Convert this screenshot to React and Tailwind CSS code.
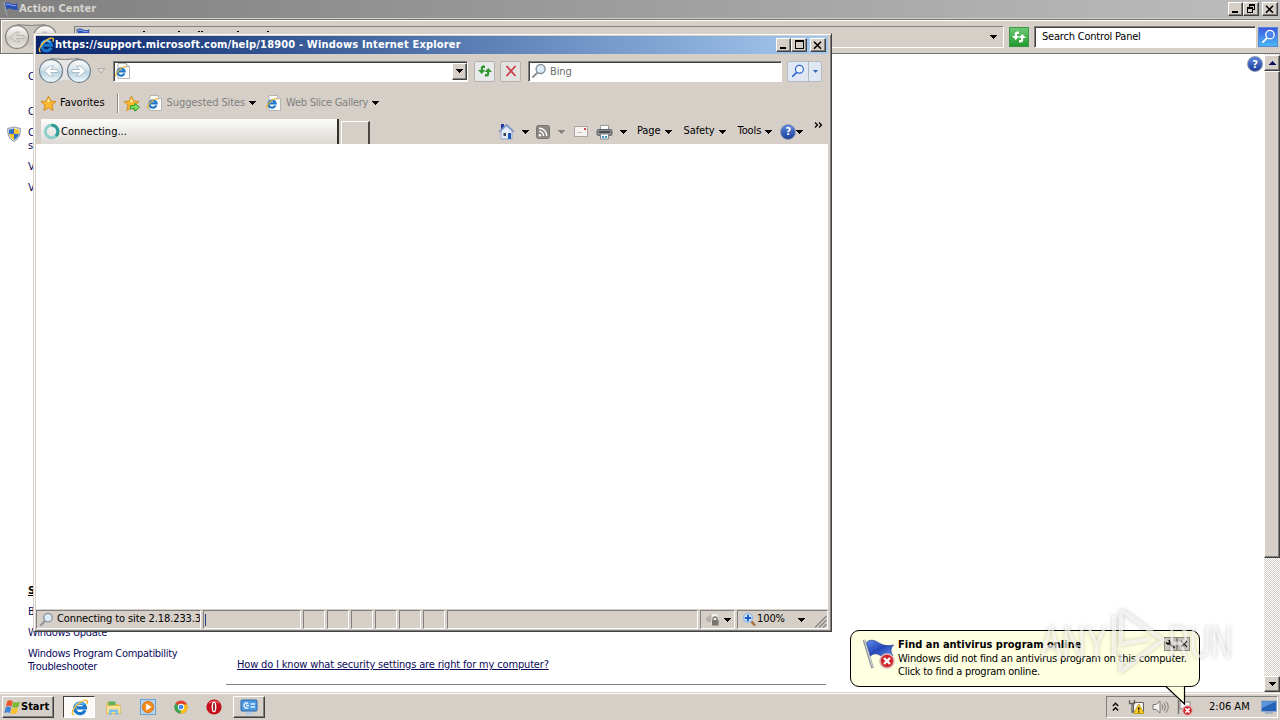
const RAISED =
  'bg-[#d6cfc8] border border-t-white border-l-white border-r-[#404040] border-b-[#404040] shadow-[inset_-1px_-1px_0_#808080]'
const SUNKEN = 'border border-t-[#808080] border-l-[#808080] border-r-white border-b-white'
const FIELD =
  'bg-white border border-t-[#808080] border-l-[#808080] border-r-white border-b-white shadow-[inset_1px_1px_0_#404040]'

/* ---------- icons ---------- */

function Caret({ className = 'text-black' }) {
  return (
    <svg width="7" height="4" viewBox="0 0 7 4" className={`shrink-0 ${className}`} shapeRendering="crispEdges">
      <path d="M0 0h7v1H6v1H5v1H4v1H3V3H2V2H1V1H0z" fill="currentColor" />
    </svg>
  )
}

function IELogo({ size = 16 }) {
  return (
    <svg width={size} height={size} viewBox="0 0 16 16" className="shrink-0">
      <path d="M13.200 10.600A5 5 0 1 1 13.500 8.300H5.500" fill="none" stroke="#1a78cc" strokeWidth="3" />
      <path d="M3.800 7.600a4.900 4.900 0 0 1 8.400-2.300" fill="none" stroke="#62c4f6" strokeWidth="1.500" />
      <path d="M2.800 14.900C-.8 14.600 2.600 7.200 8 3.600c3.400-2.400 6.600-3.200 7.300-1.700.3.800 0 1.900-.5 2.900" fill="none" stroke="#f2bb3c" strokeWidth="1.400" />
    </svg>
  )
}

function IEPage() {
  return (
    <svg width="16" height="16" viewBox="0 0 16 16" className="shrink-0">
      <path d="M3 .5h8.500L14.500 3.500v12H3z" fill="#fff" stroke="#b4b4b4" />
      <path d="M11.500.5v3h3" fill="#e8e8e8" stroke="#b4b4b4" />
      <path d="M9.400 10.400A3.600 3.600 0 1 1 9.600 8.400H3.500" fill="none" stroke="#1f78c8" strokeWidth="2.200" />
      <path d="M1.400 13.200C-.4 12 2.800 7.400 6 5.200c2.400-1.600 4.800-2.100 5.200-.6" fill="none" stroke="#e5b23a" strokeWidth="1.200" />
    </svg>
  )
}

function FlagIcon({ size = 16 }) {
  return (
    <svg width={size} height={size} viewBox="0 0 16 16" className="shrink-0">
      <path d="M1 1.500l2.800 13" stroke="#9aa0a8" strokeWidth="1.300" />
      <path d="M2 2.500c2-1.400 4-1 6 0s4 .8 6.500-.2c-.6 2-.6 4 .8 6.200-3 .8-4.800.4-6.800-.4s-3.400-.6-5 .6z" fill="#2a4fb5" />
      <path d="M3 3.600c1.800-.8 3.200-.4 4.800.4s2.800.9 5 .5" fill="none" stroke="#7f9ce6" strokeWidth="1.200" />
    </svg>
  )
}

function BigFlag() {
  return (
    <svg width="34" height="34" viewBox="0 0 34 34" className="shrink-0">
      <defs>
        <linearGradient id="flagCloth" x1="0" y1="0" x2="1" y2="1">
          <stop offset="0" stopColor="#5f8df0" />
          <stop offset=".5" stopColor="#2447b8" />
          <stop offset="1" stopColor="#6a9af2" />
        </linearGradient>
      </defs>
      <path d="M2 3l8.500 28" stroke="#8f9499" strokeWidth="2.600" />
      <path d="M2.500 3l8 27" stroke="#d9dcdf" strokeWidth="1" />
      <path d="M4.500 5.500C8 2 12 3 16 5.500s8 4 15.500 2.500C28 12 28.500 15 31 19c-6 2.500-10 1-13.500-1S11.500 16.500 8.500 19z" fill="url(#flagCloth)" stroke="#2a4496" strokeWidth=".8" />
    </svg>
  )
}

function NavArrows({ muted, id }) {
  const fill = muted ? '#cfcac4' : '#b9d3e0'
  return (
    <svg width="54" height="28" viewBox="0 0 54 28" className="shrink-0">
      <defs>
        <linearGradient id={id} x1="0" y1="0" x2="0" y2="1">
          <stop offset="0" stopColor="#ffffff" />
          <stop offset=".45" stopColor={muted ? '#dedad5' : '#d5e3ea'} />
          <stop offset=".55" stopColor={fill} />
          <stop offset="1" stopColor={muted ? '#e9e6e2' : '#f3fcff'} />
        </linearGradient>
      </defs>
      <path d="M13 1.500c6 0 9 1 14 1s8-1 14-1a12.500 12.500 0 0 1 0 25c-6 0-9-4-14-4s-8 4-14 4a12.500 12.500 0 0 1 0-25z" fill={muted ? '#c9c4be' : '#e6e5e3'} />
      <path d="M13 1.500c6 0 9 1 14 1s8-1 14-1" fill="none" stroke="#8f8c88" strokeWidth="1.200" />
      {[13, 41].map((cx) => (
        <circle key={cx} cx={cx} cy="14" r="11.500" fill={`url(#${id})`} stroke={muted ? '#8b8783' : '#76838c'} strokeWidth="1.300" />
      ))}
      <path
        d="M20 12.500v3h-7.500l3 3.500h-3.500L6.500 14 12 9h3.500l-3 3.500zM34 12.500v3h7.500l-3 3.500H42l5.500-5L42 9h-3.500l3 3.500z"
        fill={muted ? '#dcd8d3' : '#ffffff'}
        stroke={muted ? '#b5b0aa' : '#9fb3c0'}
        strokeWidth=".8"
      />
    </svg>
  )
}

function RefreshArrows({ light }) {
  const c = light ? '#ffffff' : '#2f9a2f'
  return (
    <svg width="16" height="16" viewBox="0 0 16 16" className="shrink-0">
      <path d="M8 2.500H6.500C4.500 2.500 3.800 3.500 3.800 5v2H1l3.700 4L8.400 7H6V5h2zM8 13.500h1.500c2 0 2.700-1 2.700-2.500V9H15l-3.700-4-3.700 4H10v2H8z" fill={c} />
    </svg>
  )
}

function Magnifier({ size = 16, color = '#8a9097', glass = '#dcecf8' }) {
  return (
    <svg width={size} height={size} viewBox="0 0 16 16" className="shrink-0">
      <path d="M6.400 9.600L2 14" stroke={color} strokeWidth="2" strokeLinecap="round" />
      <circle cx="9.600" cy="6" r="4.500" fill={glass} stroke={color} strokeWidth="1.400" />
    </svg>
  )
}

function Star({ plus }) {
  return (
    <svg width="17" height="17" viewBox="0 0 16 16" className="shrink-0">
      <path d="M8 1l2.100 4.700 5 .5-3.800 3.400 1.100 5L8 12l-4.400 2.600 1.100-5L.9 6.200l5-.5z" fill="#fcb833" stroke="#d08a1c" strokeWidth=".9" />
      <path d="M8 2.800l1.300 3.700H6.500z" fill="#fff0b0" />
      {plus && <path d="M7 10h4V7.800l4.600 3.700L11 15.200V13H7z" fill="#7be05a" stroke="#2f9a2f" strokeWidth=".9" />}
    </svg>
  )
}

function HelpIcon() {
  return (
    <span className="flex size-4 shrink-0 items-center justify-center rounded-full border border-[#8d98b4] bg-linear-to-b from-[#5d86dc] to-[#1d3f9c] text-[11px] leading-none font-bold tracking-normal text-white">
      ?
    </span>
  )
}

function HomeIcon() {
  return (
    <svg width="17" height="17" viewBox="0 0 17 17" className="shrink-0">
      <path d="M3 1h3v5H3z" fill="#2836a8" />
      <path d="M3 8l5.500-5L14 8v8H3z" fill="#e3ebf6" stroke="#8fa6c8" />
      <path d="M1 9l7.500-7.300L16 9" fill="none" stroke="#7b93c4" strokeWidth="1.500" />
      <path d="M10 10h3v6h-3z" fill="#2456b8" />
      <path d="M5.500 10h2.500v3H5.500z" fill="#3b4350" />
    </svg>
  )
}

function FeedIcon() {
  return (
    <svg width="14" height="14" viewBox="0 0 14 14" className="shrink-0">
      <rect x=".5" y=".5" width="13" height="13" rx="2" fill="#8c8884" stroke="#77736f" />
      <circle cx="4" cy="10.200" r="1.300" fill="#fff" />
      <path d="M3 6.300a4.700 4.700 0 0 1 4.700 4.700M3 3.200a7.800 7.800 0 0 1 7.800 7.800" fill="none" stroke="#fff" strokeWidth="1.400" />
    </svg>
  )
}

function MailIcon() {
  return (
    <svg width="14" height="11" viewBox="0 0 14 11" className="shrink-0">
      <rect x=".5" y=".5" width="13" height="10" fill="#f6f4f2" stroke="#a9a5a0" />
      <path d="M10 2h2v2h-2z" fill="#d0454c" />
      <path d="M3 6.500h5" stroke="#c4c0bb" />
    </svg>
  )
}

function PrinterIcon() {
  return (
    <svg width="17" height="16" viewBox="0 0 17 16" className="shrink-0">
      <path d="M4.500 1.500h8v5h-8z" fill="#fff" stroke="#9a9a9a" />
      <rect x="1" y="5.500" width="15" height="6" rx="1.500" fill="#8b8f94" stroke="#5f6368" />
      <path d="M3 8h11" stroke="#33373b" strokeWidth="1.500" />
      <path d="M4.500 10h8v5h-8z" fill="#fff" stroke="#7d8791" />
      <path d="M6 12h2v2H6zM9 12h2v2H9z" fill="#3b9ad0" />
    </svg>
  )
}

function Shield() {
  return (
    <svg width="14" height="16" viewBox="0 0 14 16" className="shrink-0">
      <path d="M7 .8c2 1 4 1.400 6.200 1.400C13.600 8.500 12 12.800 7 15.300 2 12.800.4 8.500.8 2.200 3 2.200 5 1.800 7 .8z" fill="#e9eef4" stroke="#7f8b98" />
      <path d="M7 2.200v5.900H2.100c-.2-1.500-.2-3-.1-4.600C3.800 3.400 5.500 3 7 2.200zM7 8.100h4.900c-.6 2.500-2 4.400-4.900 5.900z" fill="#2f6fcc" />
      <path d="M7 2.200v5.900h4.900c.2-1.500.2-3 .1-4.600C10.200 3.400 8.500 3 7 2.200zM7 8.100H2.100C2.700 10.600 4.100 12.500 7 14z" fill="#f5c431" />
    </svg>
  )
}

function WindowsFlag() {
  return (
    <svg width="17" height="17" viewBox="0 0 16 16" className="shrink-0">
      <path d="M3 2.200c1.700-1.200 3.500-1.200 5.200-.1L7 7.200c-1.700-1-3.500-1-5.200 0z" fill="#e8572a" />
      <path d="M8.700 2.500c1.900 1 3.900 1 6.300-.2l-1.400 5C11.600 8.400 9.700 8.400 7.600 7.500z" fill="#7db832" />
      <path d="M1.600 7.900c1.700-1 3.500-1 5.200 0l-1.200 5.300c-1.700-1-3.500-1-5.300 0z" fill="#3b84d8" />
      <path d="M7.400 8.200c1.900.9 3.900 1 6 0l-1.300 5.100c-2 1-4 1-5.900 0z" fill="#f7c02c" />
    </svg>
  )
}

function ExplorerIcon() {
  return (
    <svg width="17" height="17" viewBox="0 0 17 17">
      <path d="M2 3h5l1 2h6v10H2z" fill="#e5bd4c" />
      <path d="M3.500 2.500h7v4h-7z" fill="#58b35c" />
      <path d="M1.500 6.500h14v8h-14z" fill="#f9e293" stroke="#d9b24c" strokeWidth=".7" />
      <path d="M4 16v-5.500h9V16h-2.500v-3h-4v3z" fill="#7fc0e8" />
    </svg>
  )
}

function MediaIcon() {
  return (
    <svg width="16" height="16" viewBox="0 0 16 16">
      <rect x=".5" y=".5" width="15" height="15" fill="#b5d4ee" stroke="#6fa0d0" />
      <circle cx="8" cy="8" r="5.700" fill="#f58a1e" stroke="#d86a10" strokeWidth=".8" />
      <path d="M6.200 4.500v7L11.500 8z" fill="#fff" />
    </svg>
  )
}

function ChromeIcon() {
  return (
    <svg width="14" height="14" viewBox="0 0 16 16">
      <circle cx="8" cy="8" r="7.500" fill="#e0412f" />
      <path d="M8 8L1.500 4.200A7.500 7.500 0 0 0 7.500 15.500L11.500 9z" fill="#35a853" />
      <path d="M8 8l-.5 7.500A7.500 7.500 0 0 0 14.900 5H8z" fill="#fbc21b" />
      <circle cx="8" cy="8" r="3.600" fill="#fff" />
      <circle cx="8" cy="8" r="2.700" fill="#4285f4" />
    </svg>
  )
}

function OperaIcon() {
  return (
    <svg width="16" height="16" viewBox="0 0 16 16">
      <circle cx="8" cy="8" r="7.600" fill="#c4101c" />
      <path d="M3 4a7 5 0 0 1 10 0" fill="none" stroke="#ee6a6a" strokeWidth="1.500" />
      <ellipse cx="8" cy="8" rx="2.400" ry="5.300" fill="#fff" />
      <ellipse cx="8" cy="8" rx=".9" ry="4.300" fill="#8a0a12" />
    </svg>
  )
}

function ControlPanelIcon() {
  return (
    <svg width="18" height="16" viewBox="0 0 18 16">
      <rect x="1" y="1" width="16" height="11" rx="1" fill="#4c9be0" stroke="#2b66a8" />
      <path d="M8.300 4.500A2.600 2.600 0 1 0 8.300 8.500M6 6.500h3" fill="none" stroke="#e4f2ff" strokeWidth="1.300" />
      <path d="M10.500 5h4.500M10.500 8h4.500" stroke="#e4f2ff" strokeWidth="1.300" />
      <path d="M6 14.500h6" stroke="#a4c9ea" strokeWidth="2" />
    </svg>
  )
}

function ErrorBadge({ className }) {
  return (
    <svg viewBox="0 0 16 16" className={className}>
      <circle cx="8" cy="8" r="7" fill="#d3232b" stroke="#dcb6b6" strokeWidth="1.600" />
      <path d="M5 5l6 6M11 5l-6 6" stroke="#fff" strokeWidth="2.400" />
    </svg>
  )
}

/* ---------- shared bits ---------- */

function WindowButtons({ restore }) {
  return (
    <div className="flex">
      <div className={`flex h-[14px] w-[15px] items-center justify-center ${RAISED}`}>
        <svg width="11" height="10" viewBox="0 0 11 10" shapeRendering="crispEdges">
          <path d="M2 7h6v2H2z" />
        </svg>
      </div>
      <div className={`flex h-[14px] w-4 items-center justify-center ${RAISED}`}>
        <svg width="11" height="10" viewBox="0 0 11 10" shapeRendering="crispEdges">
          {restore ? (
            <path d="M3 0h6v6H7V5h1V2H4v1H3zM1 3h6v6H1zM2 5v3h4V5z" fillRule="evenodd" />
          ) : (
            <path d="M1 0h9v9H1zM2 2v6h7V2z" fillRule="evenodd" />
          )}
        </svg>
      </div>
      <div className={`ml-[3px] flex h-[14px] w-4 items-center justify-center ${RAISED}`}>
        <svg width="10" height="9" viewBox="0 0 10 9">
          <path d="M1 .8l7 7M8 .8l-7 7" stroke="#000" strokeWidth="1.600" />
        </svg>
      </div>
    </div>
  )
}

function ScrollBar() {
  return (
    <div className="flex w-4 shrink-0 flex-col bg-[repeating-conic-gradient(#d4d0c8_0_25%,#fff_0_50%)] bg-[length:2px_2px]">
      <div className={`mt-px flex h-[16px] items-center justify-center ${RAISED}`}>
        <Caret className="rotate-180" />
      </div>
      <div className={`h-[487px] ${RAISED}`} />
      <div className="flex-1" />
      <div className={`flex h-4 items-center justify-center ${RAISED}`}>
        <Caret />
      </div>
    </div>
  )
}

/* ---------- Action Center ---------- */

function ActionCenter() {
  return (
    <div className="flex h-[692px] flex-col">
      <div className="flex h-[18px] items-center bg-linear-to-r from-[#808080] to-[#bdbdbd] pr-[2px] pl-[3px]">
        <FlagIcon />
        <span className="flex-1 pt-px text-[11px] font-bold tracking-[0.08px] text-[#d8d5cf]">Action Center</span>
        <WindowButtons restore />
      </div>
      <div className="mt-px flex h-[35px] items-center border-t border-b border-l border-[#77736e] bg-[#d6cfc8] pr-[2px] pl-[3px] shadow-[inset_1px_1px_0_#fff]">
        <NavArrows muted id="acNav" />
        <div className={`ml-4 flex h-[22px] w-[930px] items-start justify-between pr-[6px] ${SUNKEN}`}>
          <FlagIcon />
          {/* tips of the address text above the front window */}
          <div className="mr-auto ml-[52px] flex pt-[4px]">
            <i className="h-px w-[2px] bg-black" />
            <i className="ml-[33px] h-px w-[2px] bg-black" />
            <i className="ml-[18px] h-px w-[2px] bg-black" />
            <i className="ml-px h-px w-[2px] bg-black" />
            <i className="ml-[34px] h-px w-[2px] bg-black" />
            <i className="ml-[28px] h-px w-[2px] bg-black" />
          </div>
          <div className="flex h-full items-center">
            <Caret />
          </div>
        </div>
        <div className="ml-[5px] flex size-5 items-center justify-center border border-[#3a9a45] bg-linear-to-b from-[#6cc873] to-[#1f9a2c]">
          <RefreshArrows light />
        </div>
        <div className={`ml-[5px] flex h-[22px] w-[222px] items-center pl-[7px] text-[11px] ${FIELD}`}>
          <span className="pt-[2px] tracking-[-0.2px]">Search Control Panel</span>
        </div>
        <div className="ml-[2px] flex size-5 shrink-0 items-center justify-center border border-[#5a86d8] bg-linear-to-b from-[#3d56e0] to-[#4cb6f4]">
          <Magnifier size={15} color="#fff" glass="#4a83ee" />
        </div>
      </div>

      <div className="flex min-h-0 flex-1 bg-white text-[11px] text-[#0a0a5c]">
        <div className="flex w-[226px] shrink-0 flex-col justify-between pt-[16px] pb-[19px] pl-7 leading-[13px] tracking-[-0.3px]">
          <div>
            <p>Control Panel Home</p>
            <p className="mt-[22px]">Change Action Center settings</p>
            <div className="mt-2 -ml-[21px] flex gap-[7px]">
              <Shield />
              <p>
                Change User Account Control
                <br />
                settings
              </p>
            </div>
            <p className="mt-2">View archived messages</p>
            <p className="mt-2">View performance information</p>
          </div>
          <div>
            <p className="font-bold text-black underline">See also</p>
            <p className="mt-2">Backup and Restore</p>
            <p className="mt-2">Windows Update</p>
            <p className="mt-2">
              Windows Program Compatibility
              <br />
              Troubleshooter
            </p>
          </div>
        </div>
        <div className="flex w-[600px] flex-col justify-end pb-[7px]">
          <p className="border-b border-[#808080] pb-[12px] pl-[11px] leading-[14px] tracking-[-0.165px] underline">
            How do I know what security settings are right for my computer?
          </p>
        </div>
        <div className="flex flex-1 justify-end pt-[2px] pr-px">
          <HelpIcon />
        </div>
        <ScrollBar />
      </div>
    </div>
  )
}

/* ---------- Internet Explorer ---------- */

function MenuItem({ children }) {
  return (
    <div className="flex items-center gap-1">
      <span>{children}</span>
      <Caret />
    </div>
  )
}

function ExplorerWindow() {
  return (
    <div className="absolute top-[33px] left-[33px] flex h-[599px] w-[799px] flex-col border border-t-[#d6cfc8] border-l-[#d6cfc8] border-r-[#404040] border-b-[#404040] bg-[#d6cfc8] py-[2px] pr-[3px] pl-[2px] text-[11px] tracking-[-0.1px] shadow-[inset_1px_1px_0_#fff,inset_-1px_-1px_0_#808080]">
      <div className="flex h-[18px] shrink-0 items-center bg-linear-to-r from-[#0a246a] to-[#a6caf0] pr-[2px] pl-[2px]">
        <IELogo />
        <span className="ml-px flex-1 pt-px font-bold tracking-[0.17px] whitespace-nowrap text-white">
          https://support.microsoft.com/help/18900 - Windows Internet Explorer
        </span>
        <WindowButtons />
      </div>

      {/* navigation row */}
      <div className="flex h-[34px] shrink-0 items-center pl-[2px]">
        <NavArrows id="ieNav" />
        <svg width="9" height="6" viewBox="0 0 9 6" className="ml-[5px]">
          <path d="M.8.5h7L4.300 5z" fill="#e4e0db" stroke="#a8a39d" strokeWidth=".9" />
        </svg>
        <div className={`ml-[7px] flex h-[21px] w-[355px] items-center pl-px ${FIELD}`}>
          <IEPage />
          <div className={`ml-auto flex h-[17px] w-[15px] items-center justify-center ${RAISED}`}>
            <Caret />
          </div>
        </div>
        <div className="ml-[6px] flex h-[21px] w-[21px] items-center justify-center rounded-[2px] border border-[#b5b1ac] bg-[#e7e9ea]">
          <RefreshArrows />
        </div>
        <div className="ml-[5px] flex h-[21px] w-[21px] items-center justify-center rounded-[2px] border border-[#b5b1ac] bg-[#e3e2e1]">
          <svg width="12" height="12" viewBox="0 0 12 12">
            <path d="M1.500 1l9 10M10.500 1l-9 10" stroke="#cc3f4c" strokeWidth="1.800" />
          </svg>
        </div>
        <div className={`ml-[7px] flex h-[21px] w-[254px] items-center gap-[3px] pl-[2px] text-[#6d6d6d] ${FIELD}`}>
          <Magnifier />
          <span className="pt-[2px]">Bing</span>
        </div>
        <div className="ml-[5px] flex h-[21px] w-[35px] rounded-[2px] border border-[#b5b9c0] bg-[#e0e8f3]">
          <div className="flex w-[21px] items-center justify-center border-r border-[#b5b9c0]">
            <Magnifier size={14} color="#2f66d4" glass="#f2f7ff" />
          </div>
          <div className="flex flex-1 items-center justify-center">
            <svg width="5" height="3" viewBox="0 0 5 3">
              <path d="M0 0h5L2.500 3z" fill="#2f66b4" />
            </svg>
          </div>
        </div>
      </div>

      {/* favorites row */}
      <div className="flex h-[30px] shrink-0 items-center pl-1">
        <Star />
        <span className="ml-[3px] tracking-normal">Favorites</span>
        <div className="ml-3 h-[19px] w-[2px] border-r border-l border-r-white border-l-[#8a8580]" />
        <div className="ml-1">
          <Star plus />
        </div>
        <div className="ml-[7px] flex items-center gap-[4px] text-[#808080]">
          <IEPage />
          <span>Suggested Sites</span>
          <Caret />
        </div>
        <div className="ml-[10px] flex items-center gap-[4px] tracking-[-0.25px] text-[#808080]">
          <IEPage />
          <span>Web Slice Gallery</span>
          <Caret />
        </div>
      </div>

      {/* tab row */}
      <div className="flex h-[26px] shrink-0 items-end pl-[5px]">
        <div className="flex h-[25px] w-[298px] items-center gap-px border-r-2 border-[#33302d] bg-linear-to-b from-[#fcfcfb] to-[#dcd9d3] pl-[2px]">
          <svg width="17" height="17" viewBox="0 0 17 17">
            <circle cx="8.500" cy="8.500" r="6.200" fill="none" stroke="#8fd0cc" strokeWidth="3" />
            <path d="M8.500 2.300A6.200 6.200 0 0 1 13 13" fill="none" stroke="#2f9a92" strokeWidth="3" />
          </svg>
          <span className="pt-px tracking-[0.02px]">Connecting...</span>
        </div>
        <div className="ml-[2px] h-[23px] w-[29px] border-t border-r-2 border-l border-t-white border-r-[#4a4744] border-l-white" />
        <div className="ml-[128px] flex h-[25px] flex-1 items-center">
          <HomeIcon />
          <Caret className="ml-[7px]" />
          <div className="ml-[7px]">
            <FeedIcon />
          </div>
          <Caret className="ml-2 text-[#8a8580]" />
          <div className="ml-[9px]">
            <MailIcon />
          </div>
          <div className="ml-2">
            <PrinterIcon />
          </div>
          <Caret className="ml-[7px]" />
          <div className="ml-[10px] flex gap-3">
            <MenuItem>Page</MenuItem>
            <MenuItem>Safety</MenuItem>
            <MenuItem>Tools</MenuItem>
          </div>
          <div className="ml-[8px] flex items-center">
            <HelpIcon />
            <Caret />
          </div>
          <svg width="9" height="6" viewBox="0 0 9 6" className="mt-[-14px] ml-[11px]">
            <path d="M1 .5L3.500 3 1 5.500M5 .5L7.500 3 5 5.500" fill="none" stroke="#000" strokeWidth="1.300" />
          </svg>
        </div>
      </div>

      <div className="flex-1 bg-white" />

      {/* status bar */}
      <div className="flex h-5 shrink-0 items-center gap-[2px] pt-px">
        <div className={`flex h-[19px] w-[165px] items-center gap-[3px] overflow-hidden pl-[2px] whitespace-nowrap ${SUNKEN}`}>
          <Magnifier size={15} />
          <span>Connecting to site 2.18.233.3</span>
        </div>
        <div className={`flex h-[19px] w-[98px] items-center pl-px ${SUNKEN}`}>
          <div className="h-3 w-px bg-[#22408e]" />
        </div>
        {[0, 1, 2, 3, 4, 5].map((i) => (
          <div key={i} className={`h-[19px] w-[22px] ${SUNKEN}`} />
        ))}
        <div className={`h-[19px] flex-1 ${SUNKEN}`} />
        <div className={`flex h-[19px] w-[35px] items-center justify-between px-[3px] ${SUNKEN}`}>
          <svg width="17" height="15" viewBox="0 0 17 15">
            <path d="M1 7l6-5h5v8H4z" fill="#b5b1ac" />
            <path d="M7.500 2h6v11h-6z" fill="#f2f0ee" />
            <path d="M9 8.500V7a2 2 0 0 1 4 0v1.500" fill="none" stroke="#77736f" strokeWidth="1.300" />
            <rect x="8" y="8" width="6.500" height="5.500" fill="#77736f" />
          </svg>
          <Caret />
        </div>
        <div className={`flex h-[19px] w-[91px] items-center pl-1 ${SUNKEN}`}>
          <svg width="15" height="15" viewBox="0 0 15 15">
            <path d="M9 9l4 4.500" stroke="#a8703c" strokeWidth="2.500" />
            <circle cx="6" cy="6" r="4.500" fill="#cfe4fa" stroke="#8fb8e6" strokeWidth="1.100" />
            <path d="M6 2.800v6.400M2.800 6h6.400" stroke="#1c5cc0" strokeWidth="1.900" />
          </svg>
          <span>100%</span>
          <Caret className="ml-[13px]" />
          <svg width="13" height="13" viewBox="0 0 13 13" className="mt-auto ml-auto">
            <path d="M1 12.500L12.500 1M5 12.500L12.500 5M9 12.500L12.500 9" stroke="#8a8580" strokeWidth="1.300" />
          </svg>
        </div>
      </div>
    </div>
  )
}

/* ---------- taskbar ---------- */

function Taskbar() {
  return (
    <div className="mt-[2px] flex h-[26px] items-center bg-[#d6cfc8] px-[2px] text-[11px] shadow-[0_-1px_0_#fff,0_-2px_0_#d6cfc8]">
      <div className={`flex h-[22px] w-[52px] items-center pl-px ${RAISED}`}>
        <WindowsFlag />
        <span className="pt-px font-bold">Start</span>
      </div>
      <div className="ml-[9px] flex h-[22px] w-8 items-center justify-center border border-t-[#404040] border-l-[#404040] border-r-white border-b-white bg-[#fbfaf9]">
        <IELogo size={17} />
      </div>
      <div className="ml-[10px] flex items-center gap-[18px]">
        <ExplorerIcon />
        <MediaIcon />
        <ChromeIcon />
        <OperaIcon />
      </div>
      <div className={`ml-[11px] flex h-[22px] w-8 items-center justify-center ${RAISED}`}>
        <ControlPanelIcon />
      </div>
      <div className={`ml-auto flex h-[22px] w-[172px] items-center pl-[5px] ${SUNKEN}`}>
        <svg width="7" height="10" viewBox="0 0 7 10">
          <path d="M.8 4L3.500 1.200 6.200 4M.8 8.500L3.500 5.700l2.700 2.800" fill="none" stroke="#000" strokeWidth="1.300" />
        </svg>
        <svg width="17" height="16" viewBox="0 0 17 16" className="ml-[9px]">
          <path d="M5.500 3.500h10v9h-10z" fill="#f4f2ef" stroke="#66635f" />
          <path d="M1.500 1v3.500h5V1M4 5v8h2" fill="none" stroke="#66635f" strokeWidth="1.300" />
          <path d="M10.800 5l5.200 9.500H5.600z" fill="#ffd21f" stroke="#b8920c" strokeWidth=".8" />
          <path d="M10.800 8.200v3M10.800 12.200v1.200" stroke="#000" strokeWidth="1.300" />
        </svg>
        <svg width="17" height="16" viewBox="0 0 17 16" className="ml-[7px]">
          <path d="M1 5.500h3L8 2v12l-4-3.500H1z" fill="#f4f2f0" stroke="#7c7974" />
          <path d="M10 5.500q2 2.500 0 5M12 4q3 4 0 8M14 2.500q4.500 5.500 0 11" fill="none" stroke="#7c7974" strokeWidth="1" />
        </svg>
        <div className="relative ml-2 h-4 w-[17px]">
          <svg width="17" height="16" viewBox="0 0 17 16">
            <path d="M1.500 1v14" stroke="#77736f" strokeWidth="1.500" />
            <path d="M3 2.500c3-1.500 5 1.500 10 .3v7c-5 1-7-1.500-10 0z" fill="#f6f4f2" stroke="#8a8782" />
          </svg>
          <ErrorBadge className="absolute right-px -bottom-px size-[11px]" />
        </div>
        <span className="ml-[15px] flex-1 pt-px">2:06 AM</span>
        <svg width="16" height="14" viewBox="0 0 16 14">
          <rect x=".5" y="1" width="15" height="10.500" fill="#2563b8" stroke="#8ea6c4" />
          <path d="M1 1.500h14L1 8z" fill="#5b95dd" />
          <path d="M4 13h8" stroke="#8ea6c4" strokeWidth="1.500" />
        </svg>
      </div>
    </div>
  )
}

function Balloon() {
  return (
    <div className="absolute top-[630px] left-[850px] flex h-[57px] w-[350px] rounded-[9px] border border-black bg-[#ffffe1] pt-[6px] pl-[11px] text-[11px] leading-[13px] text-black">
      <div className="relative size-[34px] shrink-0">
        <BigFlag />
        <ErrorBadge className="absolute right-px bottom-[2px] size-4" />
      </div>
      <div className="ml-[2px] pt-px whitespace-nowrap">
        <p className="font-bold">Find an antivirus program online</p>
        <p className="mt-px tracking-[-0.2px]">Windows did not find an antivirus program on this computer.</p>
        <p className="tracking-[-0.25px]">Click to find a program online.</p>
      </div>
      <div className="absolute top-[6px] right-[9px] flex">
        <div className="flex h-[14px] w-[13px] items-center justify-center border border-[#8f8b86] bg-[#cfccc3]">
          <svg width="11" height="10" viewBox="0 0 11 10" className="shrink-0">
            <path d="M1 3.500l2 1.500 2-1.500L4 1" fill="none" stroke="#000" strokeWidth="1.500" />
            <path d="M4.500 4.500L9.500 9" stroke="#222" strokeWidth="2" />
          </svg>
        </div>
        <div className="flex h-[14px] w-[13px] items-center justify-center border border-[#8f8b86] bg-[#cfccc3]">
          <svg width="8" height="8" viewBox="0 0 8 8">
            <path d="M1 1l6 6M7 1L1 7" stroke="#222" strokeWidth="1.200" />
          </svg>
        </div>
      </div>
      <svg width="22" height="20" viewBox="0 0 22 20" className="absolute top-[54px] left-[314px]">
        <path d="M1 1.500L19.500 19V1.500" fill="#ffffe1" stroke="none" />
        <path d="M1 1.500L19.500 19V1.500" fill="none" stroke="#000" strokeWidth="1.200" />
      </svg>
    </div>
  )
}

function Watermark() {
  return (
    <div className="pointer-events-none absolute top-[606px] left-[1040px] flex h-[70px] w-[194px] items-center justify-between font-['Liberation_Sans',sans-serif] text-[47px] leading-none text-white/60 drop-shadow-[0_0_2px_rgba(0,0,0,0.35)]">
      <span className="w-[66px] origin-left scale-x-[0.7]">ANY</span>
      <svg width="62" height="68" viewBox="0 0 62 68" className="shrink-0">
        <path d="M15 3L57 33 15 64V46M15 3v34l28-5M8 9v40" fill="none" stroke="#fff" strokeOpacity=".6" strokeWidth="4" />
      </svg>
      <span className="w-[66px] origin-left scale-x-[0.63]">RUN</span>
    </div>
  )
}

export default function App() {
  return (
    <div className="relative h-[720px] w-[1280px] overflow-hidden bg-[#d6cfc8] font-['DejaVu_Sans_Condensed','DejaVu_Sans',sans-serif]">
      <ActionCenter />
      <Taskbar />
      <ExplorerWindow />
      <Balloon />
      <Watermark />
    </div>
  )
}
